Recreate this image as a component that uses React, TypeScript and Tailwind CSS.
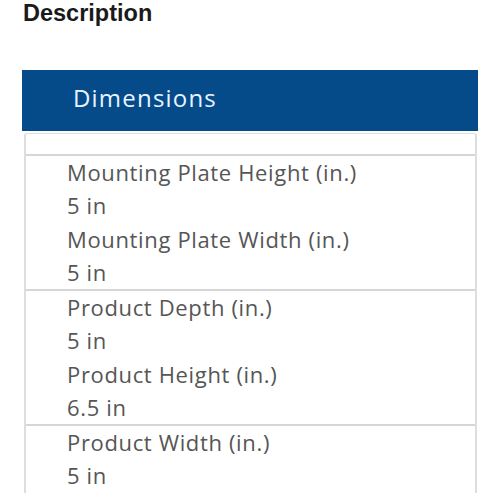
const groups = [
  [
    ["Mounting Plate Height (in.)", "5 in"],
    ["Mounting Plate Width (in.)", "5 in"],
  ],
  [
    ["Product Depth (in.)", "5 in"],
    ["Product Height (in.)", "6.5 in"],
  ],
  [["Product Width (in.)", "5 in"]],
]

export default function App() {
  return (
    <div className="w-[500px] h-[497px] overflow-hidden bg-white px-[22px]">
      {/* Title */}
      <h2 className="font-['Liberation_Sans',Arial,sans-serif] font-bold text-[23.5px] leading-[26px] text-[#1a1a1a] pl-[1px]">
        Description
      </h2>

      {/* Dimensions header */}
      <div className="mt-[44px] h-[61px] bg-[#054b8a] flex items-center pl-[51px] pb-[5px] w-[456px]">
        <span className="font-['Open_Sans',sans-serif] font-medium text-[24px] text-[#e8f4ff] tracking-[1.2px]">Dimensions</span>
      </div>

      {/* Spec table */}
      <div className="mt-[2px] ml-[2px] w-[453px] border-x-2 border-t border-[#dedede] rounded-t-[3px]">
        <div className="h-[20px]" />
        {groups.map((rows, i) => (
          <div key={i} className="border-t-2 border-[#d6d6d6] pl-[41px]">
            {rows.map(([label, value]) => (
              <div key={label} className="font-['Open_Sans',sans-serif] text-[22px] leading-[33.25px] tracking-[0.65px] text-[#565656]">
                <div>{label}</div>
                <div>{value}</div>
              </div>
            ))}
          </div>
        ))}
      </div>
    </div>
  )
}
